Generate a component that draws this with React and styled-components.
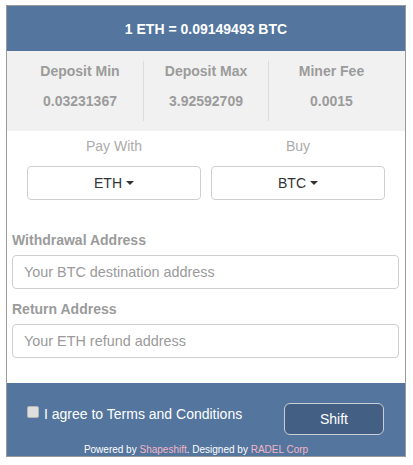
import React from "react";
import styled, { createGlobalStyle } from "styled-components";

const Global = createGlobalStyle`
  html, body { margin: 0; padding: 0; background: #fff; }
  body { font-family: "Liberation Sans", Arial, sans-serif; }
  * { box-sizing: border-box; }
`;

const Page = styled.div`
  padding: 5px 0 0 6px;
`;

const Card = styled.div`
  width: 400px;
  border: 1px solid #9a9a9a;
  background: #fff;
`;

const Header = styled.div`
  height: 45px;
  background: #53759e;
  color: #fff;
  font-weight: bold;
  font-size: 14px;
  display: flex;
  align-items: center;
  justify-content: center;
`;

const Stats = styled.div`
  background: #f1f1f1;
  padding: 10px 10px;
  display: grid;
  grid-template-columns: 126px 125px 126px;
`;

const Stat = styled.div`
  height: 60px;
  display: flex;
  flex-direction: column;
  align-items: center;
  justify-content: flex-start;
  gap: 10px;
  border-left: ${(p) => (p.$first ? "none" : "1px solid #dcdcdc")};
  color: #9b9b9b;
  font-weight: bold;
  font-size: 14px;
  line-height: 20px;
`;

const Pairs = styled.div`
  padding: 5px 20px 0 20px;
  display: grid;
  grid-template-columns: 174px 174px;
  column-gap: 10px;
`;

const PairCol = styled.div`
  display: flex;
  flex-direction: column;
  align-items: stretch;
`;

const PairLabel = styled.div`
  text-align: center;
  color: #ababab;
  font-size: 14px;
  line-height: 20px;
  margin-bottom: 10px;
`;

const SelectButton = styled.div`
  height: 34px;
  border: 1px solid #cfcfcf;
  border-radius: 4px;
  display: flex;
  align-items: center;
  justify-content: center;
  color: #333;
  font-size: 14px;
`;

const Caret = styled.span`
  display: inline-block;
  width: 0;
  height: 0;
  margin-left: 4px;
  border-top: 4px solid #333;
  border-left: 4px solid transparent;
  border-right: 4px solid transparent;
`;

const Fields = styled.div`
  padding: 30px 6px 0 5px;
  display: flex;
  flex-direction: column;
`;

const FieldLabel = styled.div`
  color: #9b9b9b;
  font-weight: bold;
  font-size: 14px;
  line-height: 20px;
  margin-top: ${(p) => (p.$first ? "0" : "10px")};
  margin-bottom: 5px;
`;

const Input = styled.input`
  height: 34px;
  width: 100%;
  border: 1px solid #cfcfcf;
  border-radius: 4px;
  padding: 0 11px;
  font-family: "Liberation Sans", Arial, sans-serif;
  font-size: 14.4px;
  color: #555;
  outline: none;
  &::placeholder { color: #9a9a9a; }
`;

const Footer = styled.div`
  margin-top: 25px;
  background: #53759e;
  padding: 20px 20px 0 20px;
  height: 73px;
  display: flex;
  flex-direction: column;
`;

const FooterRow = styled.div`
  display: flex;
  justify-content: space-between;
  align-items: flex-start;
`;

const Agree = styled.label`
  display: flex;
  align-items: center;
  margin-top: 1px;
  color: #fff;
  font-size: 14px;
  line-height: 20px;
`;

const Box = styled.span`
  display: inline-block;
  width: 12px;
  height: 12px;
  margin-right: 5px;
  margin-top: -5px;
  background: #dedede;
  border: 1px solid #b5b5b5;
  border-radius: 2px;
`;

const ShiftButton = styled.button`
  width: 100px;
  height: 32px;
  margin-right: 1px;
  background: #445f84;
  border: 1px solid #c9ced6;
  border-radius: 6px;
  color: #fff;
  font-family: "Liberation Sans", Arial, sans-serif;
  font-size: 14px;
  font-weight: normal;
  cursor: pointer;
`;

const Credits = styled.div`
  margin-top: 8px;
  padding-right: 20px;
  text-align: center;
  font-size: 10px;
  line-height: 14px;
  color: #fff;
`;

const Link = styled.span`
  color: #f3b6c6;
`;

export default function App() {
  return (
    <Page>
      <Global />
      <Card>
        <Header>1 ETH = 0.09149493 BTC</Header>
        <Stats>
          <Stat $first>
            <span>Deposit Min</span>
            <span>0.03231367</span>
          </Stat>
          <Stat>
            <span>Deposit Max</span>
            <span>3.92592709</span>
          </Stat>
          <Stat>
            <span>Miner Fee</span>
            <span>0.0015</span>
          </Stat>
        </Stats>
        <Pairs>
          <PairCol>
            <PairLabel>Pay With</PairLabel>
            <SelectButton>
              ETH<Caret />
            </SelectButton>
          </PairCol>
          <PairCol>
            <PairLabel>Buy</PairLabel>
            <SelectButton>
              BTC<Caret />
            </SelectButton>
          </PairCol>
        </Pairs>
        <Fields>
          <FieldLabel $first>Withdrawal Address</FieldLabel>
          <Input placeholder="Your BTC destination address" />
          <FieldLabel>Return Address</FieldLabel>
          <Input placeholder="Your ETH refund address" />
        </Fields>
        <Footer>
          <FooterRow>
            <Agree>
              <Box />I agree to Terms and Conditions
            </Agree>
            <ShiftButton>Shift</ShiftButton>
          </FooterRow>
          <Credits>
            Powered by <Link>Shapeshift</Link>. Designed by <Link>RADEL Corp</Link>
          </Credits>
        </Footer>
      </Card>
    </Page>
  );
}
